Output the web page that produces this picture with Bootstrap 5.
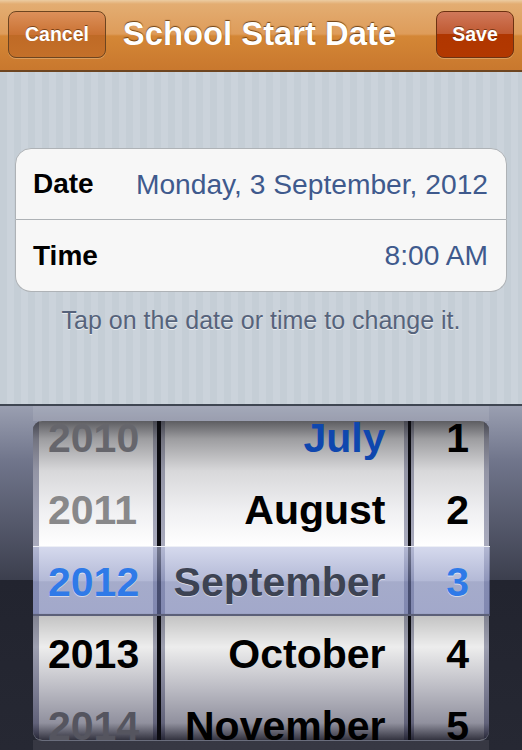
<!DOCTYPE html>
<html lang="en">
<head>
<meta charset="utf-8">
<title>School Start Date</title>
<link rel="stylesheet" href="https://cdn.jsdelivr.net/npm/bootstrap@5.3.0/dist/css/bootstrap.min.css">
<style>
html,body{height:100%;margin:0}
body{width:522px;height:750px;overflow:hidden;font-family:"Liberation Sans",Arial,sans-serif;background:#c8d0d8}
.app-bar{height:72px;padding:0 8px;flex-wrap:nowrap;background:linear-gradient(#eccca2 0,#e3ad72 4px,#de9c5a 34px,#d48736 36px,#c9782e 69px);border-bottom:2px solid #6e4520;justify-content:flex-start;gap:0}
.bar-btn{font-size:19.5px;font-weight:700;color:#fff;height:47px;padding:0;display:flex;align-items:center;justify-content:center;border-radius:8px;text-shadow:0 -1px 0 rgba(70,30,0,.6);margin-top:-1px;box-shadow:0 1px 0 rgba(255,235,200,.3)}
.btn-cancel{width:98px;border:1px solid #6d4520;background:linear-gradient(#dc905a 0,#ca7233 50%,#bf6a26 51%,#c47029 100%)}
.btn-save{width:78px;border:1px solid #6d3212;background:linear-gradient(#d0785a 0,#c05a32 48%,#b03600 50%,#b23800 100%);margin-left:auto}
.bar-title{flex:1;text-align:center;font-size:32.8px;font-weight:700;color:#fff;text-shadow:0 -1px 1px rgba(80,40,0,.8);margin:-3px 0 0;padding-right:23px;white-space:nowrap}
.form-area{height:332px;padding:76px 15px 0;background:repeating-linear-gradient(90deg,#c5ced6 0,#c5ced6 7px,#cbd3db 7px,#cbd3db 14px)}
.field-list{--bs-list-group-border-color:#aeb2b6;--bs-list-group-bg:#f7f7f7;border-radius:16px}
.field-row{height:72px;display:flex;align-items:center;justify-content:space-between;padding:0 18px 0 17px;font-size:28px}
.field-name{font-weight:700;color:#000}
.field-val{color:#3f5a8d;font-size:28.2px}
.hint{margin:14px 0 0;text-align:center;font-size:25px;color:#56637b;text-shadow:0 1px 0 rgba(255,255,255,.6);line-height:28px}
.picker{position:relative;height:346px;padding:15px 33px 0;border-top:2px solid #3f4652;background:linear-gradient(#9a9fb1 0,#70758b 55px,#3c3f4e 174px,#22242f 174px,#262833 100%)}
.picker-band{position:absolute;left:33px;width:456px;height:15px;top:0;background:rgba(255,255,255,.1)}
.picker-foot{position:absolute;left:33px;width:456px;height:10px;bottom:0;background:rgba(255,255,255,.08)}
.wheels{position:relative;display:flex;justify-content:space-between;height:319px;border-radius:9px;overflow:hidden;background:#0b0b10;box-shadow:0 1px 0 #6a6d7c;width:456px}
.wheel{position:relative;overflow:hidden;font-size:41px;font-weight:700;line-height:72px;color:#000;
--v:linear-gradient(rgba(30,30,36,.72) 0,rgba(60,60,66,.5) 18px,rgba(60,60,70,.2) 50px,rgba(60,60,90,.08) 90px,rgba(255,255,255,0) 125px,rgba(255,255,255,0) 192px,rgba(0,0,0,.24) 194px,rgba(0,0,0,.07) 226px,rgba(10,10,40,.28) 268px,rgba(10,10,40,.45) 302px,rgba(15,15,30,.85) 319px)}
.wheel-year{width:124px;padding-left:15px;background:var(--v),linear-gradient(90deg,#a9abbd 6px,#fff 6px,#fff 120px,#a9abbd 120px)}
.wheel-month{width:247px;text-align:right;padding-right:22px;background:var(--v),linear-gradient(90deg,#a9abbd 4px,#fff 4px,#fff 243px,#a9abbd 243px)}
.wheel-day{width:78px;text-align:right;padding-right:20px;background:var(--v),linear-gradient(90deg,#a9abbd 3px,#fff 3px,#fff 73px,#a9abbd 73px)}
.wheel-items{margin-top:-19px}
.wheel-item{height:72px;white-space:nowrap}
.muted-top{color:#66666c}
.muted-year{color:#88888a}
.fade-year{color:#55555f}
.past{color:#0f47ae}
.raised{position:relative;z-index:2;text-shadow:0 1px 0 rgba(255,255,255,.55)}
.sel-blue{color:#2f7ae8}
.sel-month{color:#3d4353}
.select-band{position:absolute;z-index:1;left:33px;top:140px;width:457px;height:70px;pointer-events:none;border-top:1px solid #eef0f6;border-bottom:2px solid #5c6078;background:linear-gradient(rgba(185,192,225,.6) 0,rgba(125,135,185,.58) 50%,rgba(110,120,170,.62) 52%,rgba(105,115,170,.62) 100%)}
</style>
</head>
<body>
<nav class="navbar app-bar">
  <button type="button" class="btn bar-btn btn-cancel">Cancel</button>
  <h1 class="bar-title">School Start Date</h1>
  <button type="button" class="btn bar-btn btn-save">Save</button>
</nav>
<main class="form-area">
  <div class="list-group field-list">
    <div class="list-group-item field-row"><span class="field-name">Date</span><span class="field-val">Monday, 3 September, 2012</span></div>
    <div class="list-group-item field-row"><span class="field-name">Time</span><span class="field-val">8:00 AM</span></div>
  </div>
  <p class="hint">Tap on the date or time to change it.</p>
</main>
<section class="picker">
  <div class="picker-band"></div>
  <div class="picker-foot"></div>
  <div class="wheels">
    <div class="wheel wheel-year"><div class="wheel-items">
      <div class="wheel-item muted-top">2010</div>
      <div class="wheel-item muted-year">2011</div>
      <div class="wheel-item sel-blue raised">2012</div>
      <div class="wheel-item">2013</div>
      <div class="wheel-item fade-year">2014</div>
    </div></div>
    <div class="wheel wheel-month"><div class="wheel-items">
      <div class="wheel-item past">July</div>
      <div class="wheel-item">August</div>
      <div class="wheel-item sel-month raised">September</div>
      <div class="wheel-item">October</div>
      <div class="wheel-item">November</div>
    </div></div>
    <div class="wheel wheel-day"><div class="wheel-items">
      <div class="wheel-item">1</div>
      <div class="wheel-item">2</div>
      <div class="wheel-item sel-blue raised">3</div>
      <div class="wheel-item">4</div>
      <div class="wheel-item">5</div>
    </div></div>
  </div>
  <div class="select-band"></div>
</section>
<script src="https://cdn.jsdelivr.net/npm/bootstrap@5.3.0/dist/js/bootstrap.bundle.min.js"></script>
</body>
</html>
